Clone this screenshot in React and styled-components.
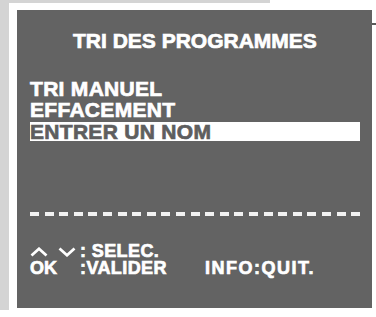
import styled, { createGlobalStyle } from 'styled-components'

const GlobalStyle = createGlobalStyle`
  html, body {
    margin: 0;
    padding: 0;
    background: #ffffff;
  }
  body {
    font-family: "Liberation Sans", Arial, sans-serif;
  }
`

const menuItems = ['TRI MANUEL', 'EFFACEMENT', 'ENTRER UN NOM']
const selectedIndex = 2

const Chevron = ({ up }) => (
  <svg width="18" height="10" viewBox="0 0 18 10">
    <polyline
      points={up ? '1.5,8.5 9,1.8 16.5,8.5' : '1.5,1.5 9,8.2 16.5,1.5'}
      fill="none"
      stroke="#ffffff"
      strokeWidth="2.8"
      strokeLinejoin="miter"
    />
  </svg>
)

export default function App() {
  return (
    <>
      <GlobalStyle />
      <Page>
        <TopBar />
        <Body>
          <LeftStrip />
          <Panel>
            <Title>TRI DES PROGRAMMES</Title>
            <Menu>
              {menuItems.map((item, i) => (
                <MenuRow key={item} $selected={i === selectedIndex}>
                  {item}
                </MenuRow>
              ))}
            </Menu>
            <Dashes />
            <Legend>
              <LegendRow>
                <KeyCell>
                  <Chevron up />
                  <Chevron />
                </KeyCell>
                <Action>: SELEC.</Action>
              </LegendRow>
              <LegendRow>
                <KeyCell>OK</KeyCell>
                <Action>:VALIDER</Action>
                <Quit>INFO:QUIT.</Quit>
              </LegendRow>
            </Legend>
          </Panel>
          <Tick />
        </Body>
      </Page>
    </>
  )
}

const Page = styled.div`
  width: 376px;
  height: 317px;
  display: flex;
  flex-direction: column;
  overflow: hidden;
`
const TopBar = styled.div`
  width: 270px;
  height: 3px;
  background: #d4d4d4;
`
const Body = styled.div`
  display: flex;
  align-items: flex-start;
`
const LeftStrip = styled.div`
  width: 9px;
  height: 307px;
  background: #d4d4d4;
`
const Panel = styled.div`
  box-sizing: border-box;
  width: 355px;
  height: 298px;
  margin: 7px 0 0 8px;
  padding: 19px 12px 0 13px;
  background: #636363;
  color: #ffffff;
  display: flex;
  flex-direction: column;
  -webkit-text-stroke: 0.7px currentColor;
`
const Title = styled.div`
  font-size: 21px;
  font-weight: 700;
  line-height: 24px;
  padding-left: 43px;
  white-space: nowrap;
`
const Menu = styled.div`
  margin-top: 25.6px;
  display: flex;
  flex-direction: column;
  gap: 2.5px;
`
const MenuRow = styled.div`
  font-size: 21px;
  font-weight: 700;
  line-height: 19px;
  height: 19px;
  letter-spacing: 0.3px;
  white-space: nowrap;
  background: ${(p) => (p.$selected ? '#ffffff' : 'transparent')};
  color: ${(p) => (p.$selected ? '#5e5e5e' : '#ffffff')};
`
const Dashes = styled.div`
  margin-top: 71.4px;
  height: 4px;
  width: 330px;
  background: repeating-linear-gradient(
    to right,
    #f2f2f2 0,
    #f2f2f2 9px,
    transparent 9px,
    transparent 14.6px
  );
`
const Legend = styled.div`
  margin-top: 27.5px;
  display: flex;
  flex-direction: column;
`
const LegendRow = styled.div`
  display: flex;
  align-items: center;
  height: 17px;
  font-size: 18px;
  font-weight: 700;
  line-height: 17px;
  white-space: nowrap;
`
const KeyCell = styled.div`
  width: 50px;
  display: flex;
  align-items: center;
  gap: 10px;
`
const Action = styled.span`
  width: 125px;
  letter-spacing: 0.4px;
`
const Quit = styled.span`
  letter-spacing: 1.5px;
`
const Tick = styled.div`
  width: 4px;
  height: 2px;
  margin-top: 20px;
  background: #5a5a5a;
`
